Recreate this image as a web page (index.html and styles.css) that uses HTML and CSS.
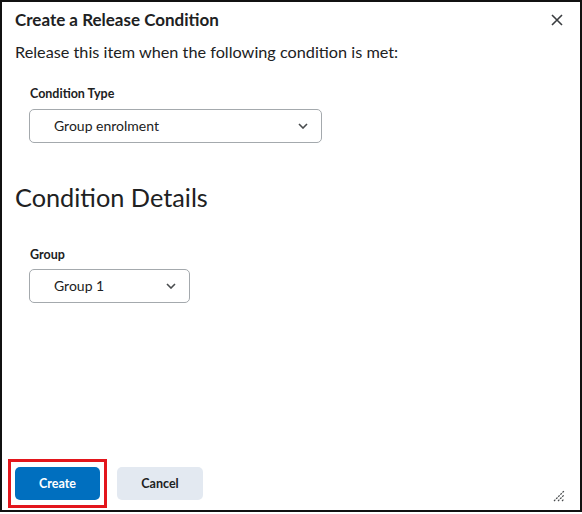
FILE: index.html
```html
<!DOCTYPE html>
<html lang="en">
<head>
    <meta charset="UTF-8">
    <meta name="viewport" content="width=device-width, initial-scale=1.0">
    <title>Create a Release Condition</title>
    <link rel="stylesheet" href="styles.css">
</head>
<body>
    <div class="dialog">
        <div class="dialog-header">
            <h1 class="dialog-title">Create a Release Condition</h1>
            <svg class="close-icon" width="12" height="12" viewBox="0 0 12 12">
                <path d="M1 1 L11 11 M11 1 L1 11" stroke="#3a3d40" stroke-width="1.6" fill="none"/>
            </svg>
        </div>

        <p class="intro">Release this item when the following condition is met:</p>

        <div class="field">
            <label class="field-label">Condition Type</label>
            <div class="select select-wide">
                <span>Group enrolment</span>
                <svg class="chevron" width="10" height="6" viewBox="0 0 10 6">
                    <path d="M1 1 L5 5 L9 1" stroke="#494c4e" stroke-width="1.6" fill="none"/>
                </svg>
            </div>
        </div>

        <h2 class="section-title">Condition Details</h2>

        <div class="field field-group">
            <label class="field-label">Group</label>
            <div class="select select-narrow">
                <span>Group 1</span>
                <svg class="chevron" width="10" height="6" viewBox="0 0 10 6">
                    <path d="M1 1 L5 5 L9 1" stroke="#494c4e" stroke-width="1.6" fill="none"/>
                </svg>
            </div>
        </div>

        <div class="dialog-footer">
            <div class="highlight">
                <button class="btn btn-primary">Create</button>
            </div>
            <button class="btn btn-secondary">Cancel</button>
            <svg class="grip" width="12" height="12" viewBox="0 0 12 12">
                <path d="M1 11 L11 1 M5 11 L11 5 M9 11 L11 9" stroke="#494c4e" stroke-width="1.2" stroke-dasharray="2 1" fill="none"/>
            </svg>
        </div>
    </div>
</body>
</html>
```

FILE: styles.css
```css
body {
    margin: 0;
    font-family: Lato, "Noto Sans", sans-serif;
    color: #202122;
    background: #fff;
}
.dialog {
    width: 582px;
    height: 512px;
    box-sizing: border-box;
    border: 2px solid #111;
    display: flex;
    flex-direction: column;
    padding: 0 15px 0 13px;
}
.dialog-header {
    display: flex;
    justify-content: space-between;
    align-items: center;
    padding-top: 6px;
    padding-right: 2px;
}
.dialog-title {
    margin: 0;
    font-size: 17px;
    font-weight: bold;
    line-height: 24px;
}
.close-icon {
    display: block;
}
.intro {
    margin: 8px 0 0;
    font-size: 16.25px;
    line-height: 24px;
}
.field {
    margin-top: 21px;
    padding-left: 15px;
}
.field-group {
    margin-top: 33px;
}
.field-label {
    display: block;
    font-size: 12.5px;
    font-weight: bold;
    line-height: 18px;
}
.select {
    margin-top: 6px;
    height: 34px;
    box-sizing: border-box;
    border: 1px solid #a4a9ad;
    border-radius: 5px;
    display: flex;
    align-items: center;
    justify-content: space-between;
    padding: 0 13px 2px 24px;
    font-size: 14px;
    margin-left: -1px;
}
.field-group .select {
    margin-top: 5px;
}
.select-wide {
    width: 293px;
}
.select-narrow {
    width: 161px;
}
.chevron {
    display: block;
    margin-top: 2px;
}
.section-title {
    margin: 38px 0 0;
    font-size: 25.3px;
    font-weight: normal;
    line-height: 32px;
}
.dialog-footer {
    margin-top: auto;
    display: flex;
    align-items: flex-end;
    padding-bottom: 2px;
}
.highlight {
    margin-left: -7px;
    padding: 5px 4px;
    border: 3px solid #e3161c;
}
.btn {
    display: block;
    height: 33px;
    border: none;
    border-radius: 5px;
    font-family: Lato, "Noto Sans", sans-serif;
    font-size: 12.5px;
    font-weight: bold;
}
.btn-primary {
    width: 85px;
    background: #006fbf;
    color: #fff;
}
.btn-secondary {
    width: 86px;
    margin: 0 0 8px 10px;
    background: #e3e9f1;
    color: #202122;
}
.grip {
    display: block;
    margin: 0 0 6px auto;
}
```
